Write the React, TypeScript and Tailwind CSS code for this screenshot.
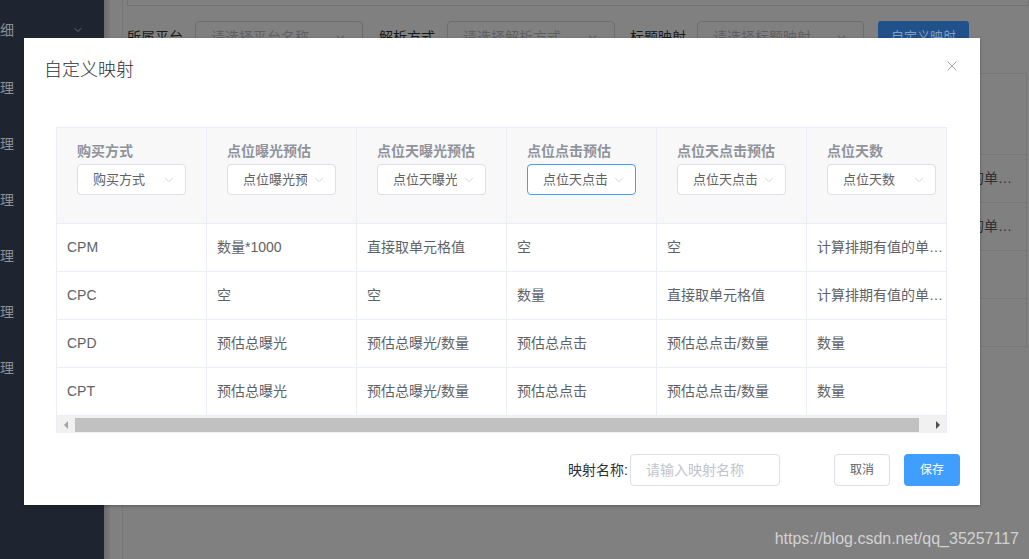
import { X, ChevronDown } from 'lucide-react';

const font = "font-['Liberation_Sans','Noto_Sans_CJK_SC',sans-serif]";

const columns = [
  { label: '购买方式', value: '购买方式' },
  { label: '点位曝光预估', value: '点位曝光预估' },
  { label: '点位天曝光预估', value: '点位天曝光预估' },
  { label: '点位点击预估', value: '点位天点击预估', focus: true },
  { label: '点位天点击预估', value: '点位天点击预估' },
  { label: '点位天数', value: '点位天数' },
];

const rows = [
  ['CPM', '数量*1000', '直接取单元格值', '空', '空', '计算排期有值的单元格数'],
  ['CPC', '空', '空', '数量', '直接取单元格值', '计算排期有值的单元格数'],
  ['CPD', '预估总曝光', '预估总曝光/数量', '预估总点击', '预估总点击/数量', '数量'],
  ['CPT', '预估总曝光', '预估总曝光/数量', '预估总点击', '预估总点击/数量', '数量'],
];

const sideItems = ['理', '理', '理', '理', '理', '理'];

const BackPage = () => (
  <div className="flex h-[559px] w-[1029px] overflow-hidden bg-[#808080]">
    {/* sidebar */}
    <div className="w-[104px] shrink-0 bg-[#1f2530] text-[14px] text-[#8b9098]">
      <div className="flex h-[60px] items-center justify-between pr-[20px]">
        <span>细</span>
        <ChevronDown size={12} className="text-[#6a707a]" />
      </div>
      {sideItems.map((t, i) => (
        <div key={i} className="flex h-[56px] items-center">{t}</div>
      ))}
    </div>
    {/* main */}
    <div className="flex flex-1 bg-[#808080]">
      <div className="w-[6px] bg-gradient-to-r from-[#6c6c6c] to-[#7a7a7a]" />
      <div className="ml-[12px] flex-1 border-l border-[#777]">
        <div className="ml-[4px] h-[6px] border-x border-b border-[#737373]" />
        <div className="ml-[4px] mt-[15px] flex items-center text-[14px]">
          <span className="w-[56px] text-[#1a1a1a]">所属平台</span>
          <div className="ml-[12px] flex h-[32px] w-[168px] items-center justify-between rounded-[4px] border border-[#6e6e6e] px-[15px] text-[#606060]">
            请选择平台名称<ChevronDown size={13} />
          </div>
          <span className="ml-[16px] w-[56px] text-[#1a1a1a]">解析方式</span>
          <div className="ml-[12px] flex h-[32px] w-[168px] items-center justify-between rounded-[4px] border border-[#6e6e6e] px-[15px] text-[#606060]">
            请选择解析方式<ChevronDown size={13} />
          </div>
          <span className="ml-[15px] w-[56px] text-[#1a1a1a]">标题映射</span>
          <div className="ml-[11px] flex h-[32px] w-[167px] items-center justify-between rounded-[4px] border border-[#6e6e6e] px-[15px] text-[#606060]">
            请选择标题映射<ChevronDown size={13} />
          </div>
          <div className="ml-[14px] flex h-[32px] w-[91px] items-center justify-center rounded-[3px] bg-[#21508a] text-[13px] text-[#7f9fc0]">
            自定义映射
          </div>
        </div>
        <div className="ml-[4px] mt-[20px] mr-[2px] flex flex-col border-t border-[#777]">
          <div className="h-[81px] border-b border-r border-[#777]" />
          {[0, 1, 2, 3].map(i => (
            <div key={i} className="flex h-[48px] border-b border-r border-[#777]">
              <div className="flex-1" />
              <div className="flex w-[150px] items-center truncate px-[10px] text-[14px] text-[#303030]">
                {i < 2 ? '计算排期有值的单…' : ''}
              </div>
            </div>
          ))}
        </div>
      </div>
    </div>
  </div>
);

const Dialog = () => (
  <div className="absolute left-[24px] top-[38px] flex h-[467px] w-[956px] flex-col bg-white shadow-[0_1px_3px_rgba(0,0,0,0.3)]">
    <div className="relative px-[20px] pt-[20px] pb-[10px]">
      <div className="h-[24px] text-[18px] font-light leading-[24px] text-[#303133]">自定义映射</div>
      <X size={16} strokeWidth={1.3} className="absolute right-[20px] top-[20px] text-[#909399]" />
    </div>
    <div className="px-[32px] pt-[35px]">
      <div className="w-[891px] overflow-hidden border-l border-t border-r border-[#ebeef5]">
        <div className="flex w-[900px]">
          {columns.map(c => (
            <div key={c.label} className="h-[96px] w-[150px] shrink-0 border-b border-r border-[#ebeef5] bg-[#f8f8f9] pl-[20px] pt-[12px]">
              <div className="h-[22px] text-[14px] font-bold leading-[22px] text-[#909399]">{c.label}</div>
              <div
                className={
                  'mt-[2px] flex h-[31px] w-[109px] items-center justify-between rounded-[4px] border bg-white pl-[15px] pr-[9px] ' +
                  (c.focus ? 'border-[#409eff]' : 'border-[#dcdfe6]')
                }
              >
                <span className="w-[64px] overflow-hidden whitespace-nowrap text-[13px] text-[#606266]">{c.value}</span>
                <ChevronDown size={14} strokeWidth={1.2} className="text-[#c0c4cc]" />
              </div>
            </div>
          ))}
        </div>
        {rows.map((r, i) => (
          <div key={i} className="flex w-[900px]">
            {r.map((v, j) => (
              <div key={j} className="flex h-[48px] w-[150px] shrink-0 items-center border-b border-r border-[#ebeef5] px-[10px] text-[14px] text-[#606266]">
                <span className="truncate">{v}</span>
              </div>
            ))}
          </div>
        ))}
        {/* horizontal scrollbar */}
        <div className="flex h-[17px] items-center bg-[#f1f1f1]">
          <div className="flex w-[18px] justify-center">
            <div className="h-0 w-0 border-y-[4px] border-r-[4px] border-y-transparent border-r-[#a3a3a3]" />
          </div>
          <div className="h-[14px] w-[844px] bg-[#c1c1c1]" />
          <div className="flex-1" />
          <div className="flex w-[17px] justify-center">
            <div className="h-0 w-0 border-y-[4px] border-l-[4px] border-y-transparent border-l-[#505050]" />
          </div>
        </div>
      </div>
    </div>
    <div className="mt-[21px] flex items-center justify-end pr-[20px]">
      <span className="text-[14px] text-[#303133]">映射名称:</span>
      <div className="ml-[2px] flex h-[32px] w-[150px] items-center rounded-[4px] border border-[#dcdfe6] pl-[15px] text-[14px] text-[#c0c4cc]">
        请输入映射名称
      </div>
      <div className="ml-[54px] flex h-[32px] w-[56px] items-center justify-center rounded-[4px] border border-[#dcdfe6] text-[12px] text-[#606266]">
        取消
      </div>
      <div className="ml-[14px] flex h-[32px] w-[56px] items-center justify-center rounded-[4px] bg-[#409eff] text-[12px] text-white">
        保存
      </div>
    </div>
  </div>
);

export default function App() {
  return (
    <div className={`relative h-[559px] w-[1029px] overflow-hidden ${font}`}>
      <BackPage />
      <Dialog />
      <div className="absolute bottom-[8px] right-[10px] text-[16px] text-[#d2d2d2]">https://blog.csdn.net/qq_35257117</div>
    </div>
  );
}
